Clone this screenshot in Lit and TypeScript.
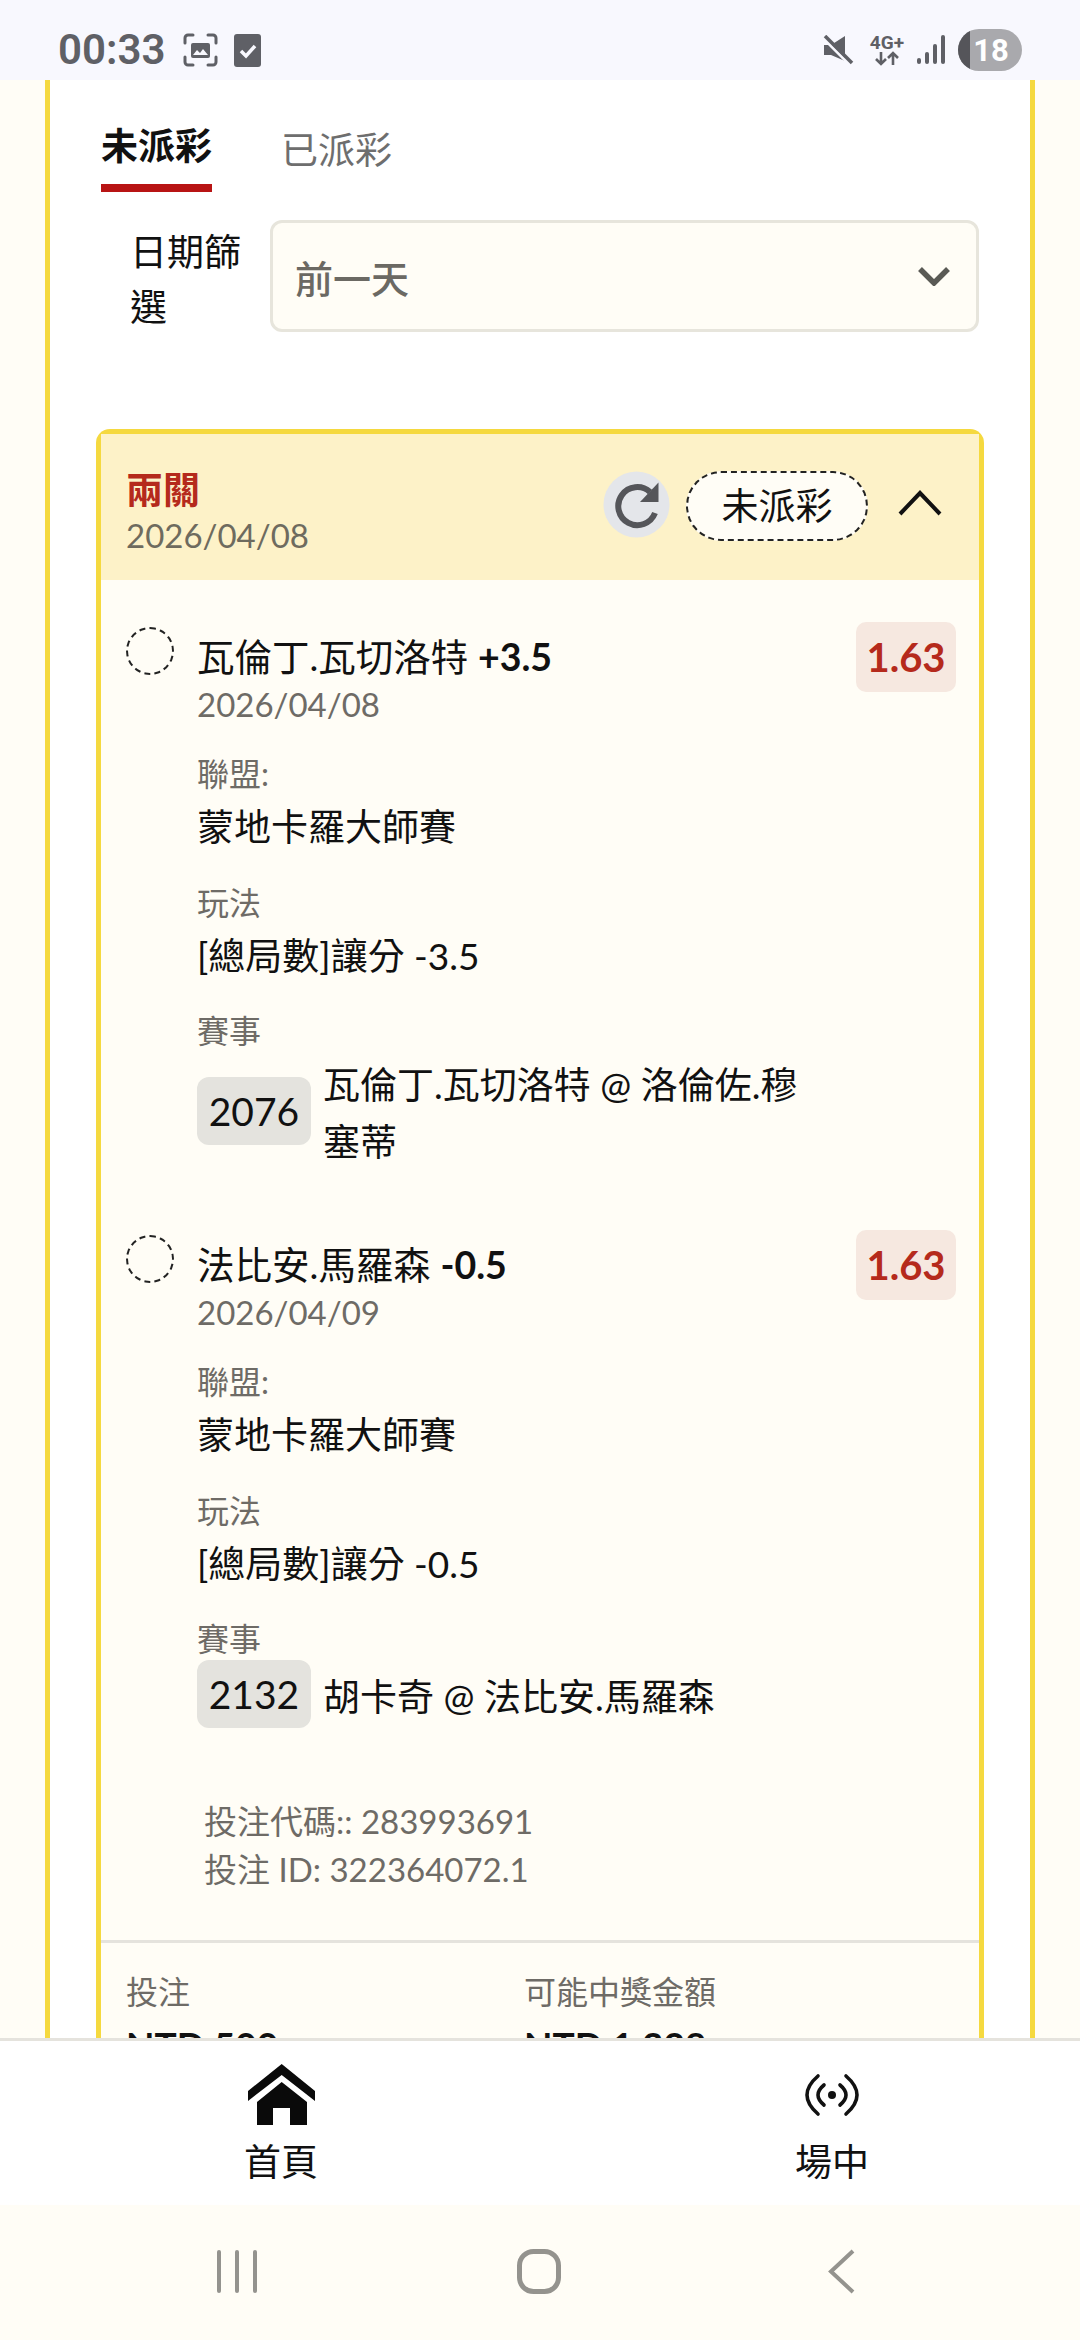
import { LitElement, css, html } from 'lit';
import { customElement } from 'lit/decorators.js';

type Bet = {
    name: string;
    line: string;
    date: string;
    odds: string;
    league: string;
    play: string;
    code: string;
    match: string;
};

const BETS: Bet[] = [
    {
        name: '瓦倫丁.瓦切洛特',
        line: '+3.5',
        date: '2026/04/08',
        odds: '1.63',
        league: '蒙地卡羅大師賽',
        play: '[總局數]讓分 -3.5',
        code: '2076',
        match: '瓦倫丁.瓦切洛特 @ 洛倫佐.穆塞蒂'
    },
    {
        name: '法比安.馬羅森',
        line: '-0.5',
        date: '2026/04/09',
        odds: '1.63',
        league: '蒙地卡羅大師賽',
        play: '[總局數]讓分 -0.5',
        code: '2132',
        match: '胡卡奇 @ 法比安.馬羅森'
    }
];

@customElement('app-root')
export class AppRoot extends LitElement {
    static styles = css`
        :host {
            display: flex;
            flex-direction: column;
            width: 1080px;
            height: 2340px;
            overflow: hidden;
            background: #fffdf6;
            color: #111;
            font-family: Lato, 'Noto Sans CJK TC', sans-serif;
        }

        /* status bar */
        .status {
            height: 80px;
            box-sizing: border-box;
            flex: none;
            display: flex;
            align-items: center;
            padding: 20px 58px 0;
            background: #f8f8fe;
            color: #5f6066;
            font-family: Roboto, sans-serif;
        }
        .time {
            font-size: 42px;
            font-weight: 600;
            line-height: 50px;
            margin-right: 18px;
        }
        .shot {
            margin-right: 16px;
        }
        .spacer {
            flex: 1;
        }
        .net {
            display: flex;
            flex-direction: column;
            align-items: center;
            margin: 0 13px 0 16px;
            font-size: 19px;
            font-weight: 700;
            line-height: 17px;
        }
        .battery {
            position: relative;
            width: 64px;
            height: 42px;
            margin: 0 0 0 13px;
            border-radius: 21px;
            overflow: hidden;
            background: #a9a9ad;
            color: #fff;
            font-size: 31px;
            font-weight: 700;
            line-height: 43px;
            text-align: center;
            padding-left: 2px;
            box-sizing: border-box;
        }
        .battery::before {
            content: '';
            position: absolute;
            left: 0;
            top: 0;
            bottom: 0;
            width: 12px;
            background: #55555a;
        }
        .battery span {
            position: relative;
        }

        /* scrolling content */
        main {
            flex: none;
            height: 1958px;
            overflow: hidden;
        }
        .panel {
            margin: 0 45px;
            border: solid #f5d93f;
            border-width: 0 5px;
            background: #fff;
            padding-top: 40px;
        }
        .tabs {
            display: flex;
            align-items: flex-start;
            gap: 69px;
            padding-left: 51px;
            height: 72px;
        }
        .tab {
            font-size: 37px;
            line-height: 52px;
            color: #6e6e6e;
            padding-top: 4px;
        }
        .tab.on {
            color: #111;
            font-weight: 700;
            padding: 0 0 12px;
            border-bottom: 8px solid #b81414;
        }
        .filter {
            display: flex;
            align-items: flex-start;
            height: 112px;
            margin: 28px 0 97px;
            padding-left: 80px;
        }
        .filter label {
            width: 112px;
            margin: 4px 28px 0 0;
            font-size: 37px;
            line-height: 55px;
        }
        .select {
            width: 709px;
            height: 112px;
            box-sizing: border-box;
            display: flex;
            align-items: center;
            justify-content: space-between;
            padding: 0 25px 0 22px;
            border: 3px solid #e7e5dc;
            border-radius: 12px;
            background: #fffdf6;
            color: #6b6963;
            font-size: 38px;
            font-weight: 500;
        }

        /* bet card */
        .card {
            margin: 0 46px;
            border: 5px solid #f5d93f;
            border-bottom: 0;
            border-radius: 14px 14px 0 0;
            background: #fffdf6;
        }
        .head {
            height: 146px;
            box-sizing: border-box;
            display: flex;
            align-items: flex-start;
            padding: 34px 37px 0 25px;
            background: #fdf2c8;
        }
        .head-text {
            flex: 1;
        }
        .kind {
            color: #b52a1c;
            font-size: 37px;
            font-weight: 700;
            line-height: 44px;
        }
        .head-date {
            color: #6e6b5e;
            font-size: 33px;
            line-height: 46px;
        }
        .refresh {
            margin: 3px 16px 0 0;
        }
        .pill {
            width: 182px;
            height: 70px;
            box-sizing: border-box;
            margin-top: 3px;
            border: 2px dashed #222;
            border-radius: 35px;
            background: #fffdf6;
            font-size: 37px;
            line-height: 66px;
            text-align: center;
        }
        .toggle {
            margin: 22px 0 0 30px;
        }
        .body {
            padding: 42px 23px 0 25px;
        }
        .bet {
            display: flex;
            margin-bottom: 60px;
        }
        .bet:last-child {
            margin-bottom: 0;
        }
        .pick {
            flex: none;
            width: 48px;
            height: 48px;
            box-sizing: border-box;
            margin: 5px 23px 0 0;
            border: 2px dashed #222;
            border-radius: 50%;
        }
        .info {
            flex: 1;
            min-width: 0;
        }
        .top {
            display: flex;
            align-items: flex-start;
            justify-content: space-between;
        }
        .title {
            margin-top: 10px;
            font-size: 37.5px;
            line-height: 50px;
        }
        .title b {
            font-weight: 700;
        }
        .bet-date {
            color: #6e6b66;
            font-size: 33px;
            line-height: 44px;
        }
        .odds {
            width: 100px;
            height: 70px;
            border-radius: 10px;
            background: #f6e8e0;
            color: #b52a1c;
            font-size: 40px;
            font-weight: 700;
            line-height: 70px;
            text-align: center;
        }
        .field {
            margin-top: -43px;
            padding-top: 70px;
        }
        .field + .field {
            margin-top: 0;
            padding-top: 27.5px;
        }
        .field-label {
            color: #6e6b66;
            font-size: 32px;
            line-height: 42px;
        }
        .field-value {
            margin-top: 5px;
            font-size: 37px;
            line-height: 54px;
        }
        .match {
            display: flex;
            align-items: center;
            gap: 12px;
        }
        .code {
            flex: none;
            width: 114px;
            height: 68px;
            border-radius: 12px;
            background: #e4e3de;
            font-size: 39px;
            line-height: 68px;
            text-align: center;
        }
        .match-name {
            width: 490px;
            padding-top: 4px;
            font-size: 37px;
            line-height: 57px;
        }
        .refs {
            margin: 69px 0 47px;
            padding-left: 103px;
            color: #6e6b66;
            font-size: 33px;
            line-height: 48px;
        }
        .totals {
            display: flex;
            padding: 28px 25px 0;
            border-top: 3px solid #e5e3dd;
        }
        .total {
            width: 398px;
        }
        .total-label {
            color: #6e6b66;
            font-size: 32px;
            line-height: 42px;
        }
        .total-value {
            margin-top: 7px;
            font-size: 37px;
            font-weight: 700;
            line-height: 50px;
        }

        /* bottom navigation */
        nav {
            flex: none;
            height: 167px;
            box-sizing: border-box;
            display: flex;
            gap: 351px;
            padding: 23px 0 0 181px;
            border-top: 3px solid #e5e3dd;
            background: #fff;
        }
        .nav-item {
            width: 200px;
            display: flex;
            flex-direction: column;
            align-items: center;
            font-size: 37px;
            line-height: 50px;
        }
        .nav-icon {
            height: 62px;
            margin-bottom: 11px;
            display: flex;
            align-items: center;
        }
        .system {
            flex: 1;
            display: flex;
            align-items: center;
            padding-left: 217px;
            padding-bottom: 3px;
        }
        .sys-menu {
            margin-right: 259px;
        }
        .sys-home {
            margin-right: 267px;
        }
        svg {
            display: block;
        }
    `;

    renderBet(bet: Bet) {
        return html`
            <div class="bet">
                <div class="pick"></div>
                <div class="info">
                    <div class="top">
                        <div>
                            <div class="title">${bet.name} <b>${bet.line}</b></div>
                            <div class="bet-date">${bet.date}</div>
                        </div>
                        <div class="odds">${bet.odds}</div>
                    </div>
                    <div class="field">
                        <div class="field-label">聯盟:</div>
                        <div class="field-value">${bet.league}</div>
                    </div>
                    <div class="field">
                        <div class="field-label">玩法</div>
                        <div class="field-value">${bet.play}</div>
                    </div>
                    <div class="field">
                        <div class="field-label">賽事</div>
                        <div class="match">
                            <div class="code">${bet.code}</div>
                            <div class="match-name">${bet.match}</div>
                        </div>
                    </div>
                </div>
            </div>
        `;
    }

    render() {
        return html`
            <div class="status">
                <span class="time">00:33</span>
                <svg class="shot" width="35" height="34" viewBox="0 0 35 34" fill="none">
                    <path
                        d="M2 10V5a3 3 0 0 1 3-3h5M25 2h5a3 3 0 0 1 3 3v5M33 24v5a3 3 0 0 1-3 3h-5M10 32H5a3 3 0 0 1-3-3v-5"
                        stroke="#5f6066"
                        stroke-width="3"
                        stroke-linecap="round"
                    />
                    <rect x="8" y="10" width="19" height="15" rx="2" fill="#5f6066" />
                    <path d="M10 22l4-5 3 3 3-4 5 6z" fill="#f8f8fe" />
                </svg>
                <svg width="27" height="33" viewBox="0 0 27 33">
                    <rect width="27" height="33" rx="3" fill="#5f6066" />
                    <path d="M7 17l5 5 9-10" fill="none" stroke="#f8f8fe" stroke-width="3.5" />
                </svg>
                <span class="spacer"></span>
                <svg width="31" height="30" viewBox="0 0 31 30">
                    <path d="M1 10h7l14-9v25L8 20H1z" fill="#5f6066" />
                    <path d="M0 3l27 27" stroke="#f8f8fe" stroke-width="3" />
                    <path d="M2 1l27 27" stroke="#5f6066" stroke-width="3.5" />
                </svg>
                <div class="net">
                    <span>4G+</span>
                    <svg width="26" height="15" viewBox="0 0 26 15" fill="none" stroke="#5f6066" stroke-width="2.6">
                        <path d="M7 1v12M2 8l5 5 5-5M19 14V2M14 7l5-5 5 5" />
                    </svg>
                </div>
                <svg width="28" height="30" viewBox="0 0 28 30" fill="#5f6066">
                    <rect x="0" y="23" width="4" height="6" rx="2" />
                    <rect x="8" y="17" width="4" height="12" rx="2" />
                    <rect x="16" y="9" width="4" height="20" rx="2" />
                    <rect x="24" y="0" width="4" height="29" rx="2" />
                </svg>
                <div class="battery"><span>18</span></div>
            </div>

            <main>
                <div class="panel">
                    <div class="tabs">
                        <div class="tab on">未派彩</div>
                        <div class="tab">已派彩</div>
                    </div>
                    <div class="filter">
                        <label>日期篩選</label>
                        <div class="select">
                            <span>前一天</span>
                            <svg width="34" height="20" viewBox="0 0 34 20" fill="none">
                                <path d="M3 3l14 14L31 3" stroke="#5a5a55" stroke-width="5.5" />
                            </svg>
                        </div>
                    </div>
                    <div class="card">
                        <div class="head">
                            <div class="head-text">
                                <div class="kind">兩關</div>
                                <div class="head-date">2026/04/08</div>
                            </div>
                            <svg class="refresh" width="67" height="67" viewBox="0 0 67 67" fill="none">
                                <circle cx="33.5" cy="33.5" r="33" fill="#e4e6ea" />
                                <path d="M47 21A19 19 0 1 0 52 42" stroke="#55565a" stroke-width="6" />
                                <path d="M55.5 11.5V31H37z" fill="#55565a" />
                            </svg>
                            <div class="pill">未派彩</div>
                            <svg class="toggle" width="44" height="26" viewBox="0 0 44 26" fill="none">
                                <path d="M2 24L22 3l20 21" stroke="#111" stroke-width="4" />
                            </svg>
                        </div>
                        <div class="body">${BETS.map((b) => this.renderBet(b))}</div>
                        <div class="refs">
                            <div>投注代碼:: 283993691</div>
                            <div>投注 ID: 322364072.1</div>
                        </div>
                        <div class="totals">
                            <div class="total">
                                <div class="total-label">投注</div>
                                <div class="total-value">NTD 500</div>
                            </div>
                            <div class="total">
                                <div class="total-label">可能中獎金額</div>
                                <div class="total-value">NTD 1,328</div>
                            </div>
                        </div>
                    </div>
                </div>
            </main>

            <nav>
                <div class="nav-item">
                    <div class="nav-icon">
                        <svg width="67" height="62" viewBox="0 0 67 62" fill="#0a0a0a">
                            <path d="M33.7 0L67 27v10L33.7 11 0 37V27z" />
                            <path d="M33.7 18L59 38v23H42V44H25v17H9V38z" />
                        </svg>
                    </div>
                    <span>首頁</span>
                </div>
                <div class="nav-item">
                    <div class="nav-icon">
                        <svg width="54" height="44" viewBox="0 0 54 44" fill="none" stroke="#111" stroke-width="3.6" stroke-linecap="round">
                            <path d="M13 3Q-9 22 13 41M41 3Q63 22 41 41M19 12Q7 22 19 32M35 12Q47 22 35 32" />
                            <circle cx="27" cy="22" r="4" fill="#111" stroke="none" />
                        </svg>
                    </div>
                    <span>場中</span>
                </div>
            </nav>

            <div class="system">
                <svg class="sys-menu" width="41" height="43" viewBox="0 0 41 43" fill="#94938e">
                    <rect x="0" y="0" width="4" height="43" rx="2" />
                    <rect x="18" y="0" width="4" height="43" rx="2" />
                    <rect x="36" y="0" width="4" height="43" rx="2" />
                </svg>
                <svg class="sys-home" width="44" height="45" viewBox="0 0 44 45" fill="none">
                    <rect x="2.5" y="2.5" width="39" height="40" rx="14" stroke="#94938e" stroke-width="5" />
                </svg>
                <svg width="27" height="45" viewBox="0 0 27 45" fill="none">
                    <path d="M25 2L3 22.5 25 43" stroke="#94938e" stroke-width="4" />
                </svg>
            </div>
        `;
    }
}
